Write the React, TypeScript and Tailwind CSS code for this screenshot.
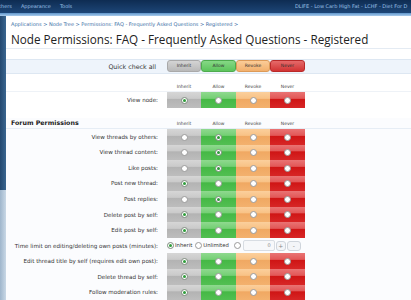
import type { ReactNode } from 'react';

type Choice = 'inherit' | 'allow' | 'revoke' | 'never';

const cells: { key: Choice; label: string; width: string; bg: string }[] = [
  {
    key: 'inherit',
    label: 'Inherit',
    width: 'w-[34px]',
    bg: 'bg-[linear-gradient(180deg,#d6d6d6_0%,#cacaca_40%,#b3b3b3_45%,#bdbdbd_100%)]',
  },
  {
    key: 'allow',
    label: 'Allow',
    width: 'w-[35px]',
    bg: 'bg-[linear-gradient(180deg,#8fd98f_0%,#74cf74_40%,#45b845_45%,#52bf52_100%)]',
  },
  {
    key: 'revoke',
    label: 'Revoke',
    width: 'w-[34px]',
    bg: 'bg-[linear-gradient(180deg,#fbcf9c_0%,#f8c286_40%,#f0a862_45%,#f3b16e_100%)]',
  },
  {
    key: 'never',
    label: 'Never',
    width: 'w-[35px]',
    bg: 'bg-[linear-gradient(180deg,#e97474_0%,#e25757_40%,#cf1515_45%,#d72626_100%)]',
  },
];

const quickButtons = [
  { label: 'Inherit', bg: 'bg-[linear-gradient(180deg,#d4d4d4,#b9b9b9)] border-[#a9a9a9]' },
  { label: 'Allow', bg: 'bg-[linear-gradient(180deg,#86d886,#5cc45c)] border-[#4eab4e]' },
  { label: 'Revoke', bg: 'bg-[linear-gradient(180deg,#fbcc98,#f2b06d)] border-[#dc9a58]' },
  { label: 'Never', bg: 'bg-[linear-gradient(180deg,#e56a6a,#d23434)] border-[#b92a2a]' },
];

const forumRows: { label: string; value: Choice }[] = [
  { label: 'View threads by others:', value: 'allow' },
  { label: 'View thread content:', value: 'allow' },
  { label: 'Like posts:', value: 'allow' },
  { label: 'Post new thread:', value: 'inherit' },
  { label: 'Post replies:', value: 'allow' },
  { label: 'Delete post by self:', value: 'inherit' },
  { label: 'Edit post by self:', value: 'inherit' },
];

const laterRows: { label: string; value: Choice }[] = [
  { label: 'Edit thread title by self (requires edit own post):', value: 'inherit' },
  { label: 'Delete thread by self:', value: 'inherit' },
  { label: 'Follow moderation rules:', value: 'inherit' },
];

function Radio({ checked }: { checked: boolean }) {
  return (
    <span
      className={`w-[7px] h-[7px] rounded-full flex items-center justify-center shrink-0 ${
        checked ? 'bg-white border border-[#7c8a7c]' : 'bg-white border border-[#9a9a9a]'
      }`}
    >
      {checked && <span className="w-[3px] h-[3px] rounded-full bg-[#2e9c3a]" />}
    </span>
  );
}

function Label({ children }: { children: ReactNode }) {
  return (
    <div className="w-[152px] shrink-0 text-right text-[5.6px] text-[#333] whitespace-nowrap">
      {children}
    </div>
  );
}

function PermRow({ label, value }: { label: string; value: Choice }) {
  return (
    <div className="flex items-center h-[16px]">
      <Label>{label}</Label>
      <div className="flex h-full ml-[9px]">
        {cells.map((c) => (
          <div key={c.key} className={`${c.width} ${c.bg} h-full flex items-center justify-center`}>
            <Radio checked={value === c.key} />
          </div>
        ))}
      </div>
    </div>
  );
}

function Headings({ title }: { title?: string }) {
  return (
    <div className="flex items-end h-[10px]">
      <div className="w-[152px] shrink-0 pl-[5px] text-[6.3px] font-bold text-[#222] leading-none pb-[2px]">
        {title}
      </div>
      <div className="flex ml-[9px] pb-[2px]">
        {cells.map((c) => (
          <div key={c.key} className={`${c.width} text-center text-[4.5px] leading-none text-[#444]`}>
            {c.label}
          </div>
        ))}
      </div>
    </div>
  );
}

export default function App() {
  return (
    <div className="w-[411px] h-[300px] overflow-hidden bg-white font-['DejaVu_Sans',sans-serif] flex flex-col">
      {/* Admin top bar */}
      <div className="h-[13px] shrink-0 bg-[linear-gradient(180deg,#0e2c52,#1d4677)] flex items-center text-[5px] text-[#9cc0e6]">
        <div className="flex gap-[9px]">
          <span className="-ml-[1px]">thers</span>
          <span>Appearance</span>
          <span>Tools</span>
        </div>
        <div className="ml-auto w-[116px] overflow-hidden whitespace-nowrap">DLIFE - Low Carb High Fat - LCHF - Diet For D</div>
      </div>
      <div className="h-[3px] shrink-0 bg-[linear-gradient(180deg,#5e95cb,#a9cbeb)]" />

      <div className="flex flex-1 min-h-0">
        {/* Left sidebar edge */}
        <div className="w-[6px] shrink-0 flex flex-col">
          <div className="h-[174px] bg-[linear-gradient(90deg,#24486f,#3a6690)]" />
          <div className="flex-1 bg-[linear-gradient(90deg,#9fb6cc,#c9d8e6)]" />
        </div>

        {/* Content */}
        <div className="flex-1 min-w-0 bg-[#fbfcfe] flex flex-col">
          <div className="bg-white">
            <div className="h-[16px] pl-[5px] pt-[6px] text-[5px] leading-none text-[#3a6ea5] whitespace-nowrap">
              Applications &gt; Node Tree &gt; Permissions: FAQ - Frequently Asked Questions &gt; Registered &gt;
            </div>
            <h1 className="h-[16px] pl-[5px] text-[11.7px] leading-[14px] text-[#222] font-['Open_Sans',sans-serif] whitespace-nowrap">
              Node Permissions: FAQ - Frequently Asked Questions - Registered
            </h1>
            <div className="h-[11px] border-t border-[#e4ebf3]" />
          </div>

          {/* Quick check all */}
          <div className="flex items-center h-[15px] bg-[#eef4fb] border-y border-[#dde7f2]">
            <Label>
              <span className="text-[6.3px] pr-[2px]">Quick check all</span>
            </Label>
            <div className="flex ml-[9px]">
              {quickButtons.map((b, i) => (
                <div
                  key={b.label}
                  className={`${cells[i].width} h-[12px] ${b.bg} border rounded-[3px] flex items-center justify-center text-[4.5px] text-[#333]`}
                >
                  {b.label}
                </div>
              ))}
            </div>
          </div>

          <div className="h-[8px] bg-white" />
          <div className="bg-white">
            <Headings />
            <div className="border-t border-[#eef2f7]">
              <PermRow label="View node:" value="inherit" />
            </div>
            <div className="h-[10px]" />
          </div>

          <div className="border-b border-[#e6edf5]">
            <Headings title="Forum Permissions" />
          </div>

          {forumRows.map((r) => (
            <PermRow key={r.label} label={r.label} value={r.value} />
          ))}

          {/* Time limit */}
          <div className="flex items-center h-[16px]">
            <Label>Time limit on editing/deleting own posts (minutes):</Label>
            <div className="flex items-center ml-[9px] text-[5.3px] text-[#333]">
              <Radio checked />
              <span className="ml-[1px]">Inherit</span>
              <span className="ml-[3px]">
                <Radio checked={false} />
              </span>
              <span className="ml-[1px]">Unlimited</span>
              <span className="ml-[5px]">
                <Radio checked={false} />
              </span>
              <div className="ml-[2px] w-[32px] h-[11px] border border-[#d8dde3] rounded-[2px] bg-[#f7f8fa] flex items-center justify-end pr-[3px] text-[5px] text-[#888]">
                0
              </div>
              <div className="ml-[1px] w-[10px] h-[10px] border border-[#cfd5dc] rounded-[3px] bg-[#f3f5f8] flex items-center justify-center text-[6px] text-[#888]">
                +
              </div>
              <div className="ml-[1px] w-[14px] h-[10px] border border-[#cfd5dc] rounded-[3px] bg-[#f3f5f8] flex items-center justify-center text-[6px] text-[#888]">
                -
              </div>
            </div>
          </div>

          {laterRows.map((r) => (
            <PermRow key={r.label} label={r.label} value={r.value} />
          ))}
        </div>
      </div>
    </div>
  );
}
